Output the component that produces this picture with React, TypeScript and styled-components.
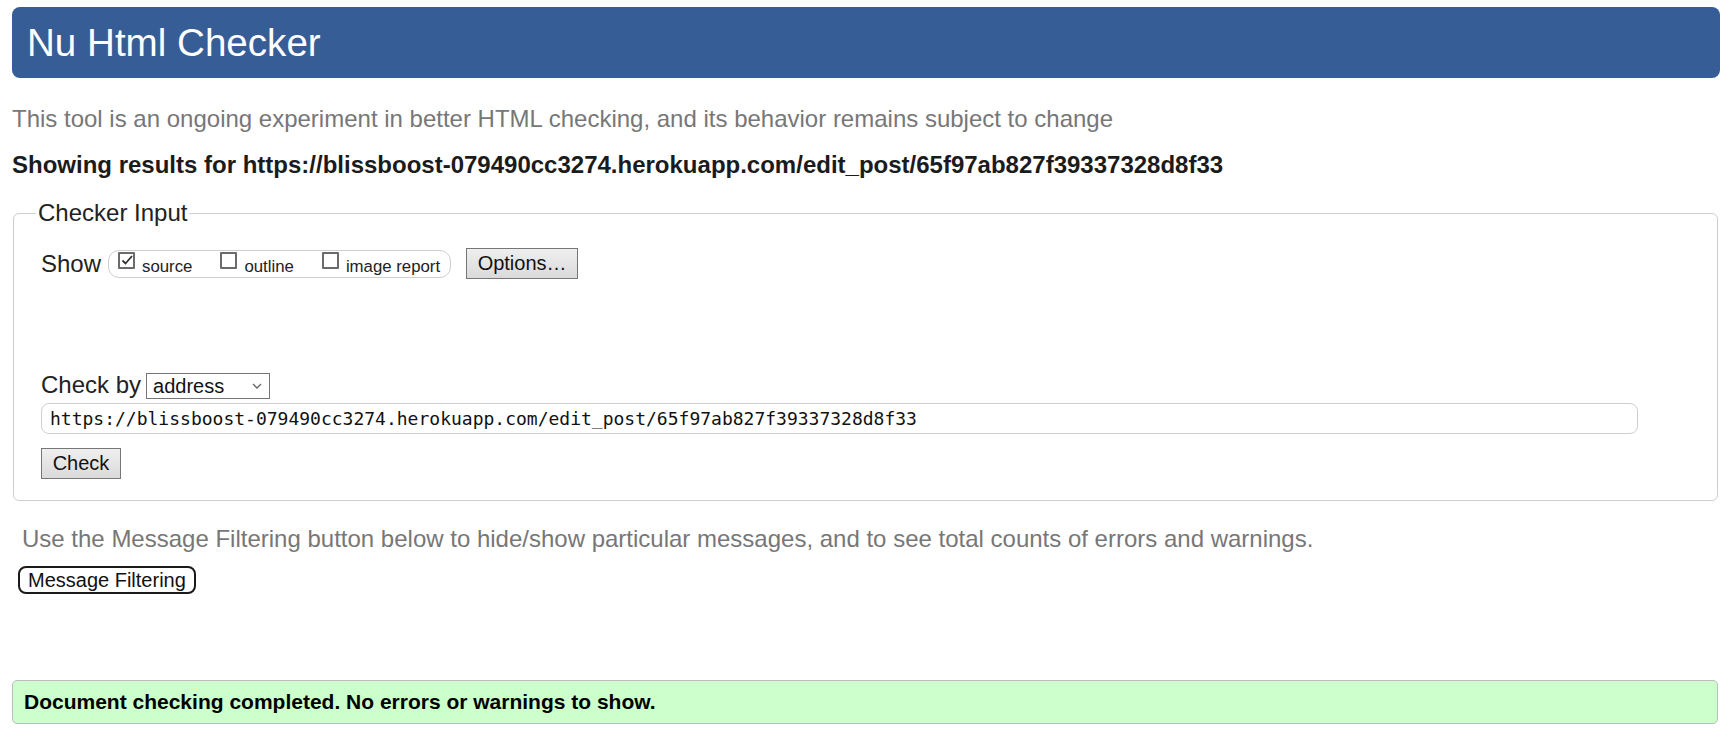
import React from "react";
import styled, { createGlobalStyle } from "styled-components";

const Global = createGlobalStyle`
  html, body { margin: 0; padding: 0; background: #fff; }
  body { font-family: "Liberation Sans", Arial, sans-serif; color: #222; }
  * { box-sizing: border-box; }
`;

const Page = styled.div`
  padding: 7px 15px 20px 12px;
`;

const Header = styled.h1`
  margin: 0;
  height: 71px;
  padding-left: 15px;
  background: #365d95;
  border-radius: 8px;
  color: #fff;
  font-size: 38.6px;
  font-weight: normal;
  line-height: 71px;
`;

const Lead = styled.p`
  margin: 29px 0 0;
  font-size: 24px;
  line-height: 24px;
  color: #777;
`;

const Results = styled.p`
  margin: 22px 0 0;
  font-size: 24px;
  line-height: 24px;
  font-weight: bold;
  color: #1b1b1b;
`;

const Fieldset = styled.fieldset`
  margin: 24px 2px 0 1px;
  padding: 23px 27px 21px 27px;
  border: 1px solid #cfcfcf;
  border-radius: 6px;
  min-width: 0;
`;

const Legend = styled.legend`
  margin-left: -5px;
  padding: 0 2px;
  font-size: 24px;
  line-height: 24px;
  color: #222;
`;

const ShowRow = styled.div`
  display: flex;
  align-items: center;
  height: 31px;
`;

const Label = styled.span<{ $gap: number }>`
  font-size: 24px;
  line-height: 26px;
  color: #222;
  margin-right: ${(p) => p.$gap}px;
`;

const Group = styled.div`
  display: flex;
  align-items: center;
  height: 28px;
  padding: 0 10px 0 9px;
  border: 1px solid #cfcfcf;
  border-radius: 11px;
  gap: 28px;
  margin-right: 15px;
`;

const Option = styled.label`
  display: block;
  font-size: 16.8px;
  line-height: 18px;
  color: #222;
  white-space: nowrap;
`;

const Box = styled.span`
  display: inline-block;
  width: 17px;
  height: 17px;
  margin: 0 7px 3px 0;
  border: 2px solid #6b6b6b;
  border-radius: 1px;
  background: #fff;
  vertical-align: baseline;
  position: relative;
  svg { position: absolute; left: -1px; top: -2px; }
`;

const Button = styled.button<{ $w: number }>`
  width: ${(p) => p.$w}px;
  height: 31px;
  padding: 0;
  border: 1px solid #767676;
  border-radius: 0;
  background: linear-gradient(#efefef, #dadada);
  font-family: "Liberation Sans", Arial, sans-serif;
  font-size: 20px;
  color: #111;
`;

const CheckByRow = styled.div`
  display: flex;
  align-items: baseline;
  margin-top: 93px;
`;

const Select = styled.div`
  display: flex;
  align-items: center;
  justify-content: space-between;
  width: 124px;
  height: 26px;
  padding: 0 6px 0 6px;
  border: 1px solid #767676;
  font-size: 20px;
  line-height: 24px;
  color: #111;
`;

const UrlInput = styled.input`
  display: block;
  width: calc(100% - 52px);
  height: 31px;
  margin-top: 4px;
  padding: 0 8px;
  border: 1px solid #cfcfcf;
  border-radius: 8px;
  font-family: "DejaVu Sans Mono", "Liberation Mono", monospace;
  font-size: 18px;
  color: #111;
  outline: none;
`;

const CheckWrap = styled.div`
  margin-top: 14px;
`;

const Note = styled.p`
  margin: 26px 0 0;
  padding-left: 10px;
  font-size: 24px;
  line-height: 24px;
  color: #777;
`;

const FilterButton = styled.button`
  display: block;
  margin: 15px 0 0 6px;
  height: 28px;
  padding: 0 8px;
  border: 2px solid #1a1a1a;
  border-radius: 8px;
  background: #fff;
  font-family: "Liberation Sans", Arial, sans-serif;
  font-size: 20px;
  line-height: 24px;
  color: #111;
`;

const Success = styled.div`
  margin: 86px 2px 0 0;
  padding: 9px 11px 9px;
  border: 1px solid #bcbcbc;
  border-radius: 5px;
  background: #ccffcc;
  font-size: 21px;
  line-height: 24px;
  font-weight: bold;
  color: #000;
`;

const Check = ({ checked }: { checked?: boolean }) => (
  <Box>
    {checked && (
      <svg width="17" height="17" viewBox="0 0 17 17">
        <polyline points="3.5,8.5 6.5,11.5 13,4" fill="none" stroke="#333" strokeWidth="1.8" />
      </svg>
    )}
  </Box>
);

const Chevron = () => (
  <svg width="12" height="8" viewBox="0 0 12 8">
    <polyline points="2,2 6,6 10,2" fill="none" stroke="#666" strokeWidth="1.3" />
  </svg>
);

const url = "https://blissboost-079490cc3274.herokuapp.com/edit_post/65f97ab827f39337328d8f33";

export default function App() {
  return (
    <>
      <Global />
      <Page>
        <Header>Nu Html Checker</Header>
        <Lead>This tool is an ongoing experiment in better HTML checking, and its behavior remains subject to change</Lead>
        <Results>Showing results for {url}</Results>
        <Fieldset>
          <Legend>Checker Input</Legend>
          <ShowRow>
            <Label $gap={7}>Show</Label>
            <Group>
              <Option><Check checked />source</Option>
              <Option><Check />outline</Option>
              <Option><Check />image report</Option>
            </Group>
            <Button $w={112}>Options…</Button>
          </ShowRow>
          <CheckByRow>
            <Label $gap={5}>Check by</Label>
            <Select>
              <span>address</span>
              <Chevron />
            </Select>
          </CheckByRow>
          <UrlInput defaultValue={url} readOnly />
          <CheckWrap>
            <Button $w={80}>Check</Button>
          </CheckWrap>
        </Fieldset>
        <Note>Use the Message Filtering button below to hide/show particular messages, and to see total counts of errors and warnings.</Note>
        <FilterButton>Message Filtering</FilterButton>
        <Success>Document checking completed. No errors or warnings to show.</Success>
      </Page>
    </>
  );
}
